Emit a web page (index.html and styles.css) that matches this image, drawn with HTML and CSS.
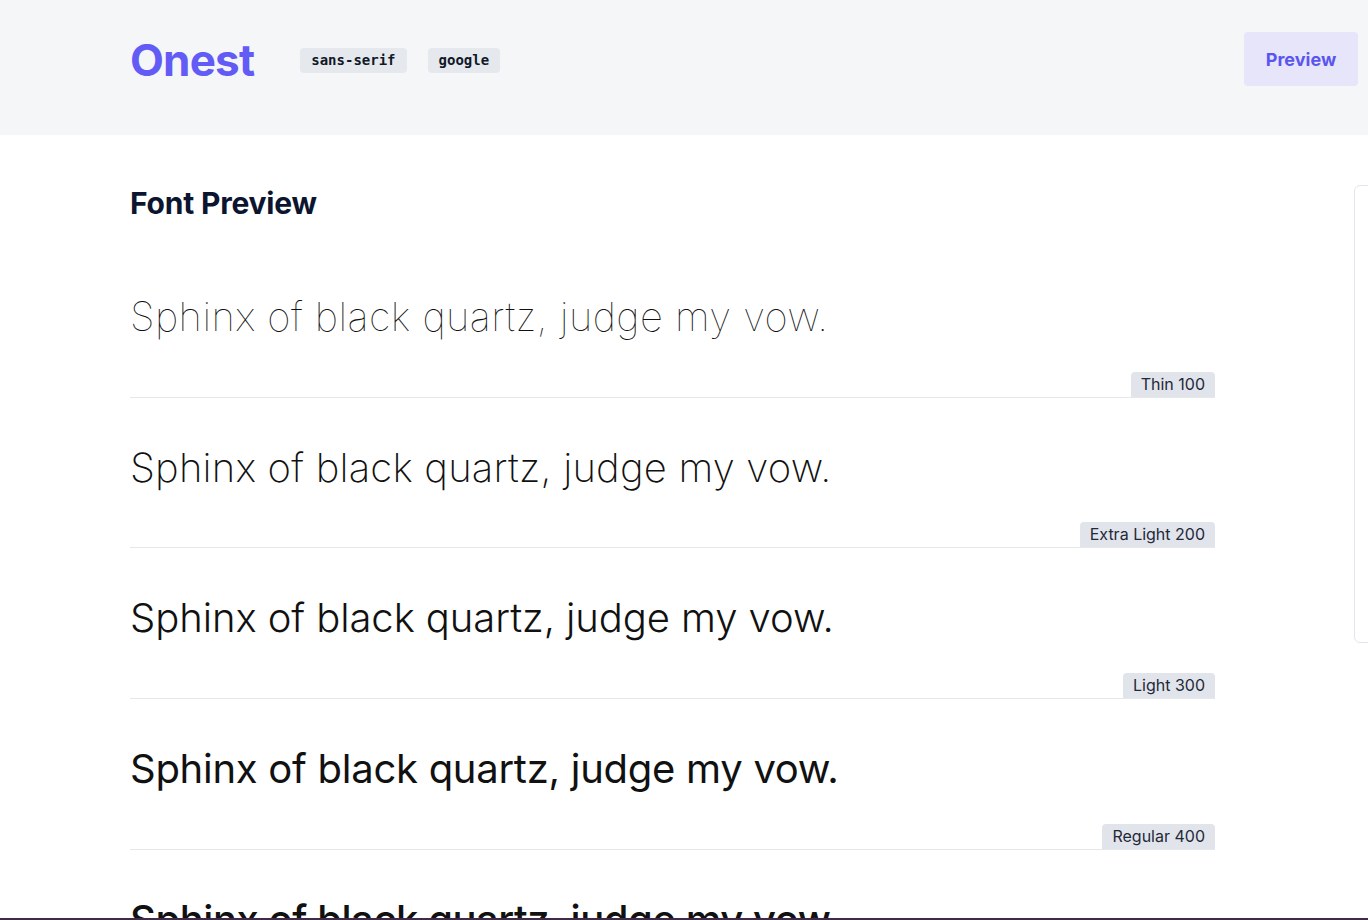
FILE: index.html
```html
<!DOCTYPE html>
<html lang="en">
<head>
<meta charset="utf-8">
<title>Onest</title>
<link rel="stylesheet" href="styles.css">
</head>
<body>
<header class="header">
  <h1 class="logo">Onest</h1>
  <div class="tags">
    <span class="tag">sans-serif</span>
    <span class="tag">google</span>
  </div>
  <button class="preview-btn">Preview</button>
</header>
<main class="main">
  <section class="content">
    <h2 class="heading">Font Preview</h2>
    <div class="row">
      <p class="sample w100">Sphinx of black quartz, judge my vow.</p>
      <div class="label-line"><span class="label">Thin 100</span></div>
    </div>
    <div class="row">
      <p class="sample w200">Sphinx of black quartz, judge my vow.</p>
      <div class="label-line"><span class="label">Extra Light 200</span></div>
    </div>
    <div class="row">
      <p class="sample w300">Sphinx of black quartz, judge my vow.</p>
      <div class="label-line"><span class="label">Light 300</span></div>
    </div>
    <div class="row">
      <p class="sample w400">Sphinx of black quartz, judge my vow.</p>
      <div class="label-line"><span class="label">Regular 400</span></div>
    </div>
    <div class="row">
      <p class="sample w500">Sphinx of black quartz, judge my vow.</p>
      <div class="label-line"><span class="label">Medium 500</span></div>
    </div>
  </section>
  <aside class="sidebar"></aside>
</main>
<div class="bottom-bar"></div>
</body>
</html>
```
FILE: styles.css
```css
* { box-sizing: border-box; }
html, body { margin: 0; padding: 0; }
body {
  font-family: "Inter", "Noto Sans", sans-serif;
  background: #ffffff;
  color: #111827;
  overflow: hidden;
  height: 920px;
}
.header {
  height: 135px;
  background: #f5f6f8;
  display: flex;
  align-items: center;
  padding: 0 10px 15px 130px;
}
.logo {
  margin: 0;
  font-size: 44px;
  font-weight: 700;
  color: #635bf6;
  letter-spacing: -0.8px;
  line-height: 1;
}
.tags {
  display: flex;
  gap: 21px;
  margin-left: 46px;
}
.tag {
  font-family: "DejaVu Sans Mono", "Liberation Mono", monospace;
  font-weight: 700;
  font-size: 14px;
  color: #111827;
  background: #e5e9ee;
  border-radius: 4px;
  height: 25px;
  display: flex;
  align-items: center;
  padding: 0 11px;
}
.preview-btn {
  margin-left: auto;
  width: 114px;
  height: 54px;
  border: none;
  border-radius: 4px;
  background: #e6e5f9;
  color: #5b55f0;
  font-family: "Inter", sans-serif;
  font-weight: 700;
  font-size: 18px;
  margin-top: -2px;
}
.main {
  display: flex;
  padding: 50px 0 0 130px;
}
.content {
  width: 1085px;
  flex-shrink: 0;
}
.heading {
  margin: 0 0 26px;
  font-size: 30px;
  line-height: 36px;
  font-weight: 700;
  color: #0b1530;
  letter-spacing: -0.2px;
}
.row {
  height: 150.7px;
  padding-top: 40px;
  display: flex;
  flex-direction: column;
}
.sample {
  margin: 0;
  font-size: 40px;
  line-height: 60px;
  color: #111111;
}
.w100 { font-weight: 100; letter-spacing: 0.43px; }
.w200 { font-weight: 200; letter-spacing: 0.19px; }
.w300 { font-weight: 300; letter-spacing: -0.08px; }
.w400 { font-weight: 400; letter-spacing: -0.27px; }
.w500 { font-weight: 500; letter-spacing: -0.45px; }
.label-line {
  margin-top: auto;
  display: flex;
  justify-content: flex-end;
  border-bottom: 1px solid #e5e7eb;
}
.label {
  background: #e2e4ec;
  color: #1f2937;
  font-size: 16px;
  height: 25px;
  line-height: 25px;
  padding: 0 10px;
  border-radius: 4px 4px 0 0;
}
.sidebar {
  flex-shrink: 0;
  margin-left: 139px;
  width: 300px;
  height: 458px;
  border: 1px solid #e4e4ee;
  border-radius: 6px;
}
.bottom-bar {
  position: fixed;
  left: 0;
  right: 0;
  bottom: 0;
  height: 2px;
  background: #3f2b48;
}
```
